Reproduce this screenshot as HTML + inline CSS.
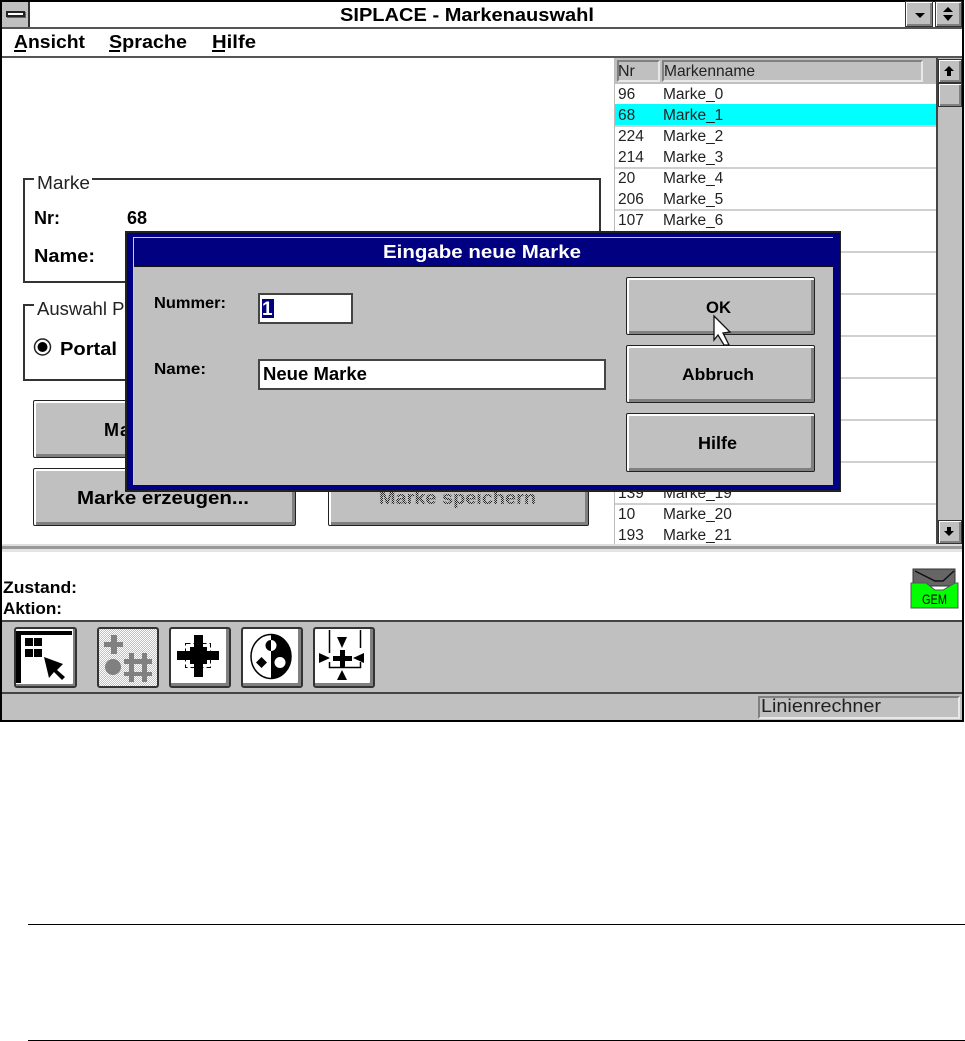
<!DOCTYPE html>
<html><head><meta charset="utf-8"><title>SIPLACE - Markenauswahl</title>
<style>
html,body{margin:0;padding:0;background:#fff;width:965px;height:1041px;overflow:hidden}
div{position:absolute;box-sizing:border-box}
svg{position:absolute;left:0;top:0}
text{font-family:"Liberation Sans",sans-serif;fill:#000}
.b{font-weight:bold}
.r{fill:#222}
.btn{background:#c0c0c0;border:1px solid #222;border-radius:2px;box-shadow:inset 2px 2px 0 #fff,inset -3px -3px 0 #808080}
.tb{background:#fff;border:2px solid #333;border-radius:3px;box-shadow:inset -3px -3px 0 #808080}
.sb{background:#c0c0c0;border:1px solid #333;box-shadow:inset 1px 1px 0 #fff,inset -2px -2px 0 #808080}
.l{background:#d0d0d0;height:2px;left:615px;width:322px}
</style></head><body>
<!-- window frame -->
<div style="left:0;top:0;width:964px;height:722px;border:2px solid #000;background:#fff"></div>
<div style="left:2px;top:27px;width:960px;height:2px;background:#555"></div>
<div style="left:2px;top:56px;width:960px;height:2px;background:#555"></div>
<div style="left:2px;top:2px;width:28px;height:25px;background:#c0c0c0;border-right:2px solid #333"></div>
<div style="left:6px;top:11px;width:19px;height:6px;background:#fff;border:2px solid #222;box-shadow:1px 1px 0 #666"></div>
<div class="sb" style="left:905px;top:1px;width:28px;height:26px"></div>
<div class="sb" style="left:935px;top:1px;width:27px;height:26px"></div>
<!-- list -->
<div style="left:614px;top:58px;width:1px;height:486px;background:#bbb"></div>
<div style="left:615px;top:58px;width:322px;height:26px;background:#c0c0c0"></div>
<div style="left:617px;top:60px;width:43px;height:22px;border:2px solid;border-color:#808080 #e8e8e8 #e8e8e8 #808080"></div>
<div style="left:662px;top:60px;width:261px;height:22px;border:2px solid;border-color:#808080 #e8e8e8 #e8e8e8 #808080"></div>
<div style="left:615px;top:104px;width:322px;height:21px;background:#0ff"></div>
<div class="l" style="top:125px"></div><div class="l" style="top:167px"></div><div class="l" style="top:209px"></div>
<div class="l" style="top:251px"></div><div class="l" style="top:293px"></div><div class="l" style="top:335px"></div>
<div class="l" style="top:377px"></div><div class="l" style="top:419px"></div><div class="l" style="top:461px"></div><div class="l" style="top:503px"></div>
<!-- scrollbar -->
<div style="left:936px;top:58px;width:26px;height:486px;background:#c0c0c0;border-left:2px solid #444;border-bottom:2px solid #444"></div>
<div class="sb" style="left:938px;top:59px;width:24px;height:24px"></div>
<div class="sb" style="left:938px;top:83px;width:24px;height:24px"></div>
<div class="sb" style="left:938px;top:520px;width:24px;height:24px"></div>
<!-- splitter -->
<div style="left:2px;top:544px;width:960px;height:2px;background:#ddd"></div>
<div style="left:2px;top:546px;width:960px;height:3px;background:#999"></div>
<div style="left:2px;top:549px;width:960px;height:3px;background:#e4e4e4"></div>
<!-- group boxes -->
<div style="left:23px;top:178px;width:578px;height:105px;border:2px solid #333"></div>
<div style="left:34px;top:172px;width:58px;height:16px;background:#fff"></div>
<div style="left:23px;top:304px;width:578px;height:77px;border:2px solid #333"></div>
<div style="left:34px;top:298px;width:110px;height:16px;background:#fff"></div>
<!-- main buttons -->
<div class="btn" style="left:33px;top:400px;width:263px;height:58px"></div>
<div class="btn" style="left:33px;top:468px;width:263px;height:58px"></div>
<div class="btn" style="left:328px;top:468px;width:261px;height:58px"></div>
<!-- toolbar + status -->
<div style="left:2px;top:620px;width:960px;height:100px;background:#c0c0c0;border-top:2px solid #444"></div>
<div style="left:2px;top:692px;width:960px;height:2px;background:#444"></div>
<div style="left:758px;top:696px;width:202px;height:23px;border:2px solid;border-color:#808080 #e8e8e8 #e8e8e8 #808080"></div>
<div class="tb" style="left:14px;top:627px;width:63px;height:61px;box-shadow:inset -2px -2px 0 #808080"></div>
<div class="tb" style="left:97px;top:627px;width:62px;height:61px;background:conic-gradient(#c0c0c0 25%,#fff 0 50%,#c0c0c0 0 75%,#fff 0);background-size:2px 2px;box-shadow:none"></div>
<div class="tb" style="left:169px;top:627px;width:62px;height:61px"></div>
<div class="tb" style="left:241px;top:627px;width:62px;height:61px"></div>
<div class="tb" style="left:313px;top:627px;width:62px;height:61px"></div>

<svg width="965" height="1041" viewBox="0 0 965 1041">
<defs><pattern id="d" width="2" height="2" patternUnits="userSpaceOnUse"><rect width="2" height="2" fill="#c0c0c0"/><rect width="1" height="1" fill="#222"/><rect x="1" y="1" width="1" height="1" fill="#222"/></pattern></defs>
<text class="b" x="340" y="21" font-size="18" textLength="254" lengthAdjust="spacingAndGlyphs">SIPLACE - Markenauswahl</text>
<text class="b" x="14" y="48" font-size="18" textLength="71" lengthAdjust="spacingAndGlyphs">Ansicht</text>
<text class="b" x="109" y="48" font-size="18" textLength="78" lengthAdjust="spacingAndGlyphs">Sprache</text>
<text class="b" x="212" y="48" font-size="18" textLength="44" lengthAdjust="spacingAndGlyphs">Hilfe</text>
<rect x="14" y="50" width="12" height="2"/><rect x="109" y="50" width="11" height="2"/><rect x="212" y="50" width="13" height="2"/>
<polygon points="915,13 925,13 920,18"/>
<polygon points="948,7 953,12 943,12"/><polygon points="943,15 953,15 948,21"/>
<!-- list text -->
<text class="r" x="618" y="76" font-size="16">Nr</text>
<text class="r" x="664" y="76" font-size="16" textLength="91" lengthAdjust="spacingAndGlyphs">Markenname</text>
<g font-size="15.500">
<text class="r" x="618" y="99">96</text><text class="r" x="663" y="99">Marke_0</text>
<text class="r" x="618" y="120">68</text><text class="r" x="663" y="120">Marke_1</text>
<text class="r" x="618" y="141">224</text><text class="r" x="663" y="141">Marke_2</text>
<text class="r" x="618" y="162">214</text><text class="r" x="663" y="162">Marke_3</text>
<text class="r" x="618" y="183">20</text><text class="r" x="663" y="183">Marke_4</text>
<text class="r" x="618" y="204">206</text><text class="r" x="663" y="204">Marke_5</text>
<text class="r" x="618" y="225">107</text><text class="r" x="663" y="225">Marke_6</text>
<text class="r" x="618" y="498">139</text><text class="r" x="663" y="498">Marke_19</text>
<text class="r" x="618" y="519">10</text><text class="r" x="663" y="519">Marke_20</text>
<text class="r" x="618" y="540">193</text><text class="r" x="663" y="540">Marke_21</text>
</g>
<!-- scroll arrows -->
<polygon points="949,66 954,71 951,71 951,76 947,76 947,71 944,71"/>
<polygon points="949,536 954,531 951,531 951,527 947,527 947,531 944,531"/>
<!-- left panel text -->
<text class="r" x="37" y="189" font-size="18.500" textLength="53" lengthAdjust="spacingAndGlyphs">Marke</text>
<text class="b" x="34" y="224" font-size="18">Nr:</text>
<text class="b" x="127" y="224" font-size="18">68</text>
<text class="b" x="34" y="262" font-size="18" textLength="61" lengthAdjust="spacingAndGlyphs">Name:</text>
<text class="r" x="37" y="315" font-size="18.500">Auswahl Portal</text>
<circle cx="42.500" cy="347" r="8" fill="#fff" stroke="#222" stroke-width="1.500"/><circle cx="42.500" cy="347" r="5"/>
<text class="b" x="60" y="355" font-size="18" textLength="57" lengthAdjust="spacingAndGlyphs">Portal</text>
<text class="b" x="104" y="436" font-size="18" letter-spacing="1">Marke</text>
<text class="b" x="77" y="504" font-size="18" textLength="172" lengthAdjust="spacingAndGlyphs">Marke erzeugen...</text>
<text class="b" x="379" y="504" font-size="18" textLength="157" lengthAdjust="spacingAndGlyphs" style="fill:url(#d)">Marke speichern</text>
<!-- status -->
<text class="b" x="3" y="593" font-size="17" textLength="74" lengthAdjust="spacingAndGlyphs">Zustand:</text>
<text class="b" x="3" y="614" font-size="17" textLength="59" lengthAdjust="spacingAndGlyphs">Aktion:</text>
<text class="r" x="761" y="712" font-size="18.500" textLength="120" lengthAdjust="spacingAndGlyphs">Linienrechner</text>
<!-- GEM -->
<rect x="913" y="569" width="42" height="17" fill="#666" stroke="#333"/>
<polyline points="915,571 935,581 943,581 954,571" fill="none" stroke="#111" stroke-width="1.500"/>
<polygon points="911,583 926,583 935,590 943,590 955,583 958,583 958,608 911,608" fill="#00ff00" stroke="#555"/>
<text x="922" y="604" font-size="14" textLength="25" lengthAdjust="spacingAndGlyphs">GEM</text>
<!-- toolbar icon 1 -->
<rect x="16" y="631" width="56" height="4"/><rect x="16" y="631" width="5" height="52"/>
<rect x="25" y="638" width="8" height="8"/><rect x="34" y="638" width="8" height="8"/><rect x="25" y="649" width="8" height="8"/><rect x="34" y="649" width="8" height="8"/>
<polygon points="44,657 63,664 57,670 65,677 62,680 54,672 49,678"/>
<!-- icon 2 -->
<g fill="#808080">
<rect x="104" y="642" width="19" height="5"/><rect x="111" y="635" width="6" height="19"/>
<circle cx="113" cy="667" r="8"/>
<rect x="129" y="653" width="5" height="29"/><rect x="142" y="653" width="5" height="29"/>
<rect x="124" y="659" width="28" height="5"/><rect x="124" y="672" width="28" height="4"/>
</g>
<!-- icon 3 -->
<rect x="194" y="635" width="9" height="42"/><rect x="177" y="651" width="42" height="9"/>
<rect x="190" y="647" width="17" height="17"/>
<rect x="185.500" y="643.500" width="25" height="24" fill="none" stroke="#000" stroke-dasharray="5 3"/>
<!-- icon 4 -->
<ellipse cx="271" cy="656.500" rx="20" ry="22" fill="#fff" stroke="#000" stroke-width="1.500"/>
<path d="M271 634.500A20 22 0 0 1 271 678.500Z"/>
<path d="M271 640A5.500 5.500 0 0 0 271 651Z"/>
<path d="M271 640A5.500 5.500 0 0 1 271 651Z" fill="#fff"/>
<path d="M261.500 657l5.500 5.500-5.500 5.500-5.500-5.500z"/>
<circle cx="280" cy="662.500" r="5.500" fill="#fff"/>
<!-- icon 5 -->
<path d="M329.500 630V653M360.500 630V648M329.500 662V667.500H360.500V662" fill="none" stroke="#000" stroke-width="1.500"/>
<rect x="333" y="656" width="19" height="5"/><rect x="340" y="650" width="5" height="17"/>
<polygon points="337,637 347,637 342,648"/><polygon points="337,680 347,680 342,670"/>
<polygon points="319,653 319,663 330,658"/><polygon points="364,653 364,663 353,658"/>
</svg>

<!-- dialog -->
<div style="left:125px;top:231px;width:715px;height:261px;background:#000080;border:1px solid #222;border-width:2px 0 2px 2px;box-shadow:1px 0 0 #222"></div>
<div style="left:133px;top:237px;width:700px;height:248px;background:#c0c0c0;border-top:1px solid #c8c8ee;border-left:1px solid #c8c8ee"></div>
<div style="left:134px;top:238px;width:699px;height:29px;background:#000080;border-bottom:1px solid #111"></div>
<div style="left:258px;top:293px;width:95px;height:31px;background:#fff;border:2px solid #444"></div>
<div style="left:262px;top:299px;width:12px;height:19px;background:#000080"></div>
<div style="left:258px;top:359px;width:348px;height:31px;background:#fff;border:2px solid #444"></div>
<div class="btn" style="left:626px;top:277px;width:189px;height:58px"></div>
<div class="btn" style="left:626px;top:345px;width:189px;height:58px"></div>
<div class="btn" style="left:626px;top:413px;width:189px;height:59px"></div>
<svg width="965" height="1041" viewBox="0 0 965 1041">
<text class="b" x="383" y="258" font-size="18" textLength="198" lengthAdjust="spacingAndGlyphs" style="fill:#fff">Eingabe neue Marke</text>
<text class="b" x="154" y="308" font-size="16" textLength="72" lengthAdjust="spacingAndGlyphs">Nummer:</text>
<text class="b" x="154" y="374" font-size="16" textLength="52" lengthAdjust="spacingAndGlyphs">Name:</text>
<text class="b" x="262" y="315" font-size="19" style="fill:#fff">1</text>
<text class="b" x="263" y="380" font-size="18" textLength="104" lengthAdjust="spacingAndGlyphs">Neue Marke</text>
<text class="b" x="706" y="313" font-size="17" textLength="25" lengthAdjust="spacingAndGlyphs">OK</text>
<text class="b" x="682" y="380" font-size="17" textLength="72" lengthAdjust="spacingAndGlyphs">Abbruch</text>
<text class="b" x="698" y="449" font-size="17.500" textLength="39" lengthAdjust="spacingAndGlyphs">Hilfe</text>
<polygon points="714,316 730,332 723,333 729,345 724,345 718,335 714,340" fill="#fff" stroke="#111" stroke-width="1.300"/>
<rect x="28" y="924" width="937" height="1"/>
<rect x="28" y="1040" width="937" height="1"/>
</svg>
</body></html>
